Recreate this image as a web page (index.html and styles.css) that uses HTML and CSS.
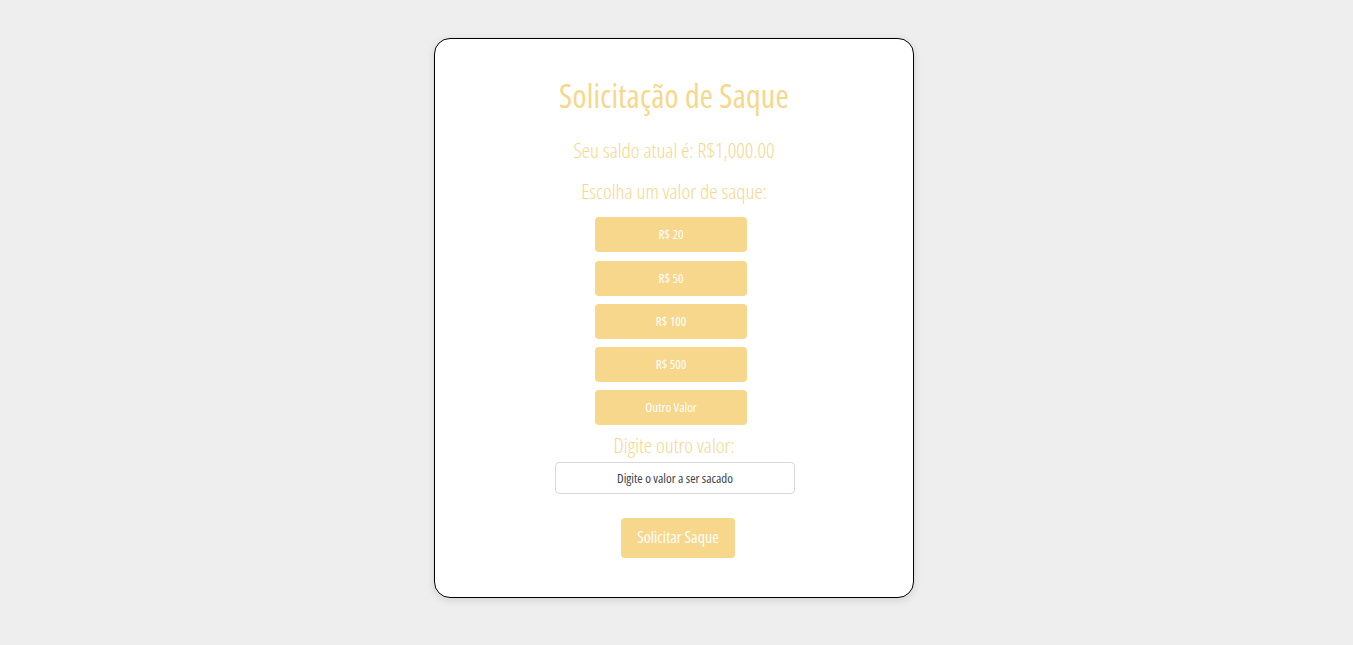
FILE: index.html
```html
<!DOCTYPE html>
<html lang="pt-BR">
<head>
<meta charset="utf-8">
<title>Solicitação de Saque</title>
<link rel="stylesheet" href="styles.css">
</head>
<body>
<main class="page">
  <section class="card">
    <h1 class="title">Solicitação de Saque</h1>
    <p class="balance">Seu saldo atual é: R$1,000.00</p>
    <p class="label">Escolha um valor de saque:</p>
    <div class="options">
      <button class="opt">R$ 20</button>
      <button class="opt">R$ 50</button>
      <button class="opt">R$ 100</button>
      <button class="opt">R$ 500</button>
      <button class="opt">Outro Valor</button>
    </div>
    <p class="label other">Digite outro valor:</p>
    <input class="amount" type="text" placeholder="Digite o valor a ser sacado">
    <button class="submit">Solicitar Saque</button>
  </section>
</main>
</body>
</html>
```

FILE: styles.css
```css
* { box-sizing: border-box; }
html, body { margin: 0; padding: 0; }
body {
  background: #eeeeee;
  font-family: "Open Sans", "Roboto", sans-serif;
  font-stretch: 75%;
  color: #f6d78b;
}
.page {
  display: flex;
  justify-content: center;
  padding-top: 38px;
  padding-right: 5px;
  height: 645px;
}
.card {
  width: 480px;
  height: 560px;
  background: #fff;
  border: 1px solid #000;
  border-radius: 16px;
  box-shadow: 0 2px 8px rgba(0,0,0,0.12);
  display: flex;
  flex-direction: column;
  align-items: center;
  padding-top: 37px;
}
.title {
  margin: 0;
  font-size: 32px;
  font-weight: 500;
  letter-spacing: 0.2px;
  line-height: 40px;
  color: #f6d78b;
}
.balance {
  margin: 22px 0 0;
  font-size: 21px;
  font-weight: 300;
  line-height: 24px;
}
.label {
  margin: 17px 0 0;
  font-size: 21px;
  font-weight: 300;
  line-height: 24px;
}
.options {
  margin-top: 14px;
  margin-right: 6px;
  display: flex;
  flex-direction: column;
  gap: 8px;
}
.opt {
  width: 152px;
  height: 35px;
  padding: 0 0 2px;
  border: none;
  border-radius: 4px;
  background: #f6d78b;
  color: #fff;
  font-family: inherit;
  font-stretch: 75%;
  font-size: 13px;
  font-weight: 400;
  cursor: pointer;
}
.opt:first-child { margin-bottom: 1px; }
.label.other { margin-top: 8px; }
.amount {
  margin-top: 5px;
  margin-left: 2px;
  width: 240px;
  height: 32px;
  padding: 0 0 1px;
  border: 1px solid #d6d8dc;
  border-radius: 4px;
  text-align: center;
  font-family: inherit;
  font-stretch: 75%;
  font-size: 13px;
  font-weight: 400;
  color: #333;
  outline: none;
}
.amount::placeholder { color: #3a3f4a; opacity: 1; }
.submit {
  margin-top: 24px;
  margin-left: 8px;
  width: 114px;
  height: 40px;
  padding: 0 0 2px;
  border: none;
  border-radius: 4px;
  background: #f6d78b;
  color: #fff;
  font-family: inherit;
  font-stretch: 75%;
  font-size: 16px;
  font-weight: 400;
  cursor: pointer;
}
```
